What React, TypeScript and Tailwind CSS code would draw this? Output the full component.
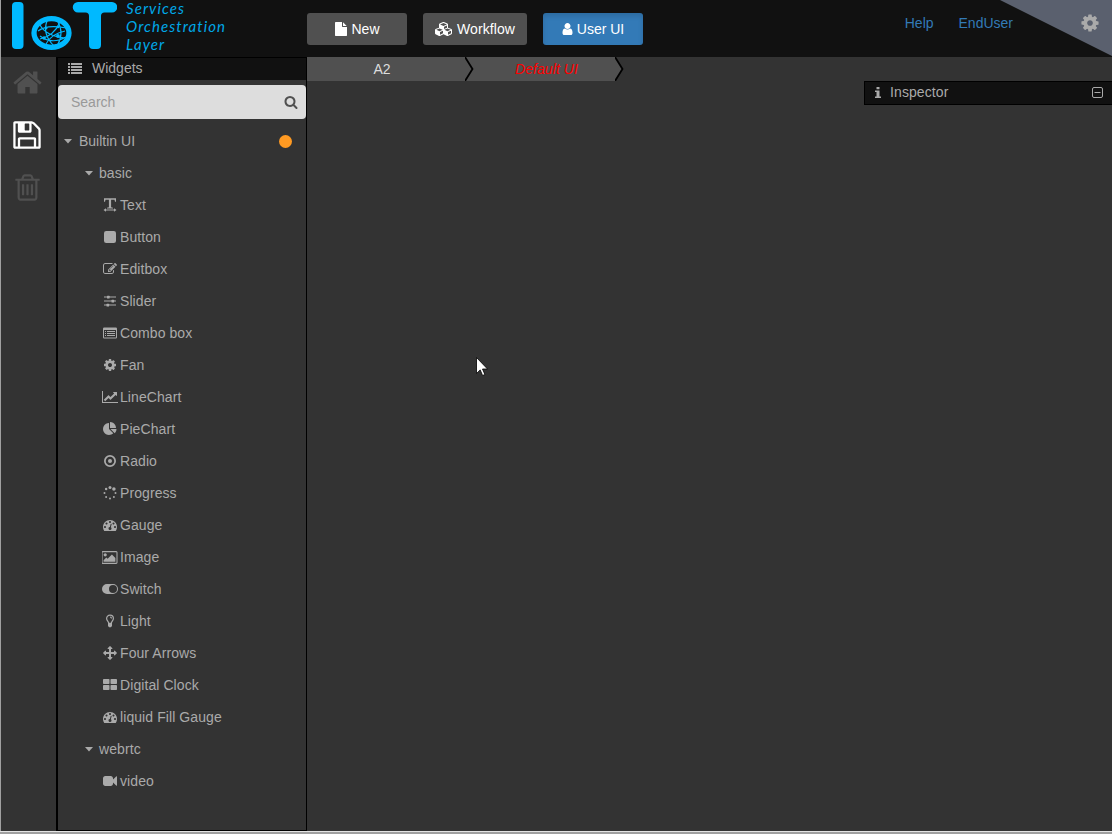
import type { ReactNode } from "react";

type GlyphProps = { w?: number; size?: string; children: ReactNode; className?: string };

function Glyph({ w = 1792, size = "h-[14px]", children, className = "" }: GlyphProps) {
  return (
    <svg viewBox={`0 0 ${w} 1792`} fill="currentColor" className={`${size} w-auto shrink-0 ${className}`}>
      {children}
    </svg>
  );
}

const home = "M1472 992v480q0 26-19 45t-45 19h-384v-384h-256v384h-384q-26 0-45-19t-19-45v-480q0-1 .5-3t.5-3l575-474 575 474q1 2 1 6zm223-69l-62 74q-8 9-21 11h-3q-13 0-21-7l-692-577-692 577q-12 8-24 7-13-2-21-11l-62-74q-8-10-7-23.5t11-21.5l719-599q32-26 76-26t76 26l244 204v-195q0-14 9-23t23-9h192q14 0 23 9t9 23v408l219 182q10 8 11 21.5t-7 23.5z";
const floppy = "M512 1536h768v-384h-768v384zm896 0h128v-896q0-14-10-38.5t-20-34.5l-281-281q-10-10-34-20t-39-10v416q0 40-28 68t-68 28h-576q-40 0-68-28t-28-68v-416h-128v1280h128v-416q0-40 28-68t68-28h832q40 0 68 28t28 68v416zm-384-928v-320q0-13-9.5-22.5t-22.5-9.5h-192q-13 0-22.5 9.5t-9.5 22.5v320q0 13 9.5 22.5t22.5 9.5h192q13 0 22.5-9.5t9.5-22.5zm640 32v928q0 40-28 68t-68 28h-1344q-40 0-68-28t-28-68v-1344q0-40 28-68t68-28h928q40 0 88 20t76 48l280 280q28 28 48 76t20 88z";
const trash = "M704 736v576q0 14-9 23t-23 9h-64q-14 0-23-9t-9-23v-576q0-14 9-23t23-9h64q14 0 23 9t9 23zm256 0v576q0 14-9 23t-23 9h-64q-14 0-23-9t-9-23v-576q0-14 9-23t23-9h64q14 0 23 9t9 23zm256 0v576q0 14-9 23t-23 9h-64q-14 0-23-9t-9-23v-576q0-14 9-23t23-9h64q14 0 23 9t9 23zm128 724v-948h-896v948q0 22 7 40.5t14.5 27 10.5 8.5h832q3 0 10.5-8.5t14.5-27 7-40.5zm-672-1076h448l-48-117q-7-9-17-11h-317q-10 2-17 11zm928 32v64q0 14-9 23t-23 9h-96v948q0 83-47 143.5t-113 60.5h-832q-66 0-113-58.5t-47-141.5v-952h-96q-14 0-23-9t-9-23v-64q0-14 9-23t23-9h309l70-167q15-37 54-63t79-26h320q40 0 79 26t54 63l70 167h309q14 0 23 9t9 23z";
const search = "M1216 832q0-185-131.5-316.5t-316.5-131.5-316.5 131.5-131.5 316.5 131.5 316.5 316.5 131.5 316.5-131.5 131.5-316.5zm512 832q0 52-38 90t-90 38q-54 0-90-38l-343-342q-179 124-399 124-143 0-273.5-55.5t-225-150-150-225-55.5-273.5 55.5-273.5 150-225 225-150 273.5-55.5 273.5 55.5 225 150 150 225 55.5 273.5q0 220-124 399l343 343q37 37 37 90z";
const cog = "M1152 896q0-106-75-181t-181-75-181 75-75 181 75 181 181 75 181-75 75-181zm512-109v222q0 12-8 23t-20 13l-185 28q-19 54-39 91 35 50 107 138 10 12 10 25t-9 23q-27 37-99 108t-94 71q-12 0-26-9l-138-108q-44 23-91 38-16 136-29 186-7 28-36 28h-222q-14 0-24.5-8.5t-11.5-21.5l-28-184q-49-16-90-37l-141 107q-10 9-25 9-14 0-25-11-126-114-165-168-7-10-7-23 0-12 8-23 15-21 51-66.5t54-70.5q-27-50-41-99l-183-27q-13-2-21-12.5t-8-23.5v-222q0-12 8-23t19-13l186-28q14-46 39-92-40-57-107-138-10-12-10-24 0-10 9-23 26-36 98.5-107.5t94.5-71.5q13 0 26 10l138 107q44-23 91-38 16-136 29-186 7-28 36-28h222q14 0 24.5 8.5t11.5 21.5l28 184q49 16 90 37l142-107q9-9 24-9 13 0 25 10 129 119 165 170 7 8 7 22 0 12-8 23-15 21-51 66.5t-54 70.5q26 50 41 98l183 28q13 2 21 12.5t8 23.5z";
const user = "M1536 1399q0 109-62.5 187t-150.5 78h-854q-88 0-150.5-78t-62.5-187q0-85 8.5-160.5t31.5-152 58.5-131 94-89 134.5-34.5q131 128 313 128t313-128q76 0 134.5 34.5t94 89 58.5 131 31.5 152 8.5 160.5zm-256-887q0 159-112.5 271.5t-271.5 112.5-271.5-112.5-112.5-271.5 112.5-271.5 271.5-112.5 271.5 112.5 112.5 271.5z";
const file = "M1152 512v-472q22 14 36 28l408 408q14 14 28 36h-472zm-128 32q0 40 28 68t68 28h544v1056q0 40-28 68t-68 28h-1344q-40 0-68-28t-28-68v-1600q0-40 28-68t68-28h800v544z";
const cubes = "M640 1632l384-192v-314l-384 164v342zm-64-454l404-173-404-173-404 173zm1088 454l384-192v-314l-384 164v342zm-64-454l404-173-404-173-404 173zm-448-293l384-165v-266l-384 164v267zm-64-379l441-189-441-189-441 189zm1088 518v416q0 36-19 67t-52 47l-448 224q-25 14-57 14t-57-14l-448-224q-5-2-7-4-2 2-7 4l-448 224q-25 14-57 14t-57-14l-448-224q-33-16-52-47t-19-67v-416q0-38 21.5-70t56.5-48l434-186v-400q0-38 21.5-70t56.5-48l448-192q23-10 50-10t50 10l448 192q35 16 56.5 48t21.5 70v400l434 186q36 16 57 48t21 70z";
const edit = "M888 1184l116-116-152-152-116 116v56h96v96h56zm440-720q-16-16-33 1l-350 350q-17 17-1 33t33-1l350-350q17-17 1-33zm80 594v190q0 119-84.5 203.5t-203.5 84.5h-832q-119 0-203.5-84.5t-84.5-203.5v-832q0-119 84.5-203.5t203.5-84.5h832q63 0 117 25 15 7 18 23 3 17-9 29l-49 49q-14 14-32 8-23-6-45-6h-832q-66 0-113 47t-47 113v832q0 66 47 113t113 47h832q66 0 113-47t47-113v-126q0-13 9-22l64-64q15-15 35-7t20 29zm-96-738l288 288-672 672h-288v-288zm444 132l-92 92-288-288 92-92q28-28 68-28t68 28l152 152q28 28 28 68t-28 68z";
const lineChart = "M2048 1536v128h-2048v-1536h128v1408h1920zm-128-1248v435q0 21-19.5 29.5t-35.5-7.5l-121-121-633 633q-10 10-23 10t-23-10l-233-233-416 416-192-192 585-585q10-10 23-10t23 10l233 233 464-464-121-121q-16-16-7.5-35.5t29.5-19.5h435q14 0 23 9t9 23z";
const pie = "M768 890l546 546q-106 108-247.5 168t-298.5 60q-209 0-385.5-103t-279.5-279.5-103-385.5 103-385.5 279.5-279.5 385.5-103v762zm187 6h773q0 157-60 298.5t-168 247.5zm709-128h-768v-768q209 0 385.5 103t279.5 279.5 103 385.5z";
const gauge = "M384 1152q0-53-37.5-90.5t-90.5-37.5-90.5 37.5-37.5 90.5 37.5 90.5 90.5 37.5 90.5-37.5 37.5-90.5zm192-448q0-53-37.5-90.5t-90.5-37.5-90.5 37.5-37.5 90.5 37.5 90.5 90.5 37.5 90.5-37.5 37.5-90.5zm428 481l101-382q6-26-7.5-48.5t-38.5-29.5-48 6.5-30 39.5l-101 382q-60 5-107 43.5t-63 98.5q-20 77 20 146t117 89 146-20 89-117q16-60-6-117t-72-91zm660-33q0-53-37.5-90.5t-90.5-37.5-90.5 37.5-37.5 90.5 37.5 90.5 90.5 37.5 90.5-37.5 37.5-90.5zm-640-640q0-53-37.5-90.5t-90.5-37.5-90.5 37.5-37.5 90.5 37.5 90.5 90.5 37.5 90.5-37.5 37.5-90.5zm448 192q0-53-37.5-90.5t-90.5-37.5-90.5 37.5-37.5 90.5 37.5 90.5 90.5 37.5 90.5-37.5 37.5-90.5zm320 448q0 261-141 483-19 29-54 29h-1402q-35 0-54-29-141-221-141-483 0-182 71-348t191-286 286-191 348-71 348 71 286 191 191 286 71 348z";
const image = "M576 576q0 80-56 136t-136 56-136-56-56-136 56-136 136-56 136 56 56 136zm1024 384v448h-1408v-192l320-320 160 160 512-512zm96-704h-1600q-13 0-22.5 9.5t-9.5 22.5v1216q0 13 9.5 22.5t22.5 9.5h1600q13 0 22.5-9.5t9.5-22.5v-1216q0-13-9.5-22.5t-22.5-9.5zm160 32v1216q0 66-47 113t-113 47h-1600q-66 0-113-47t-47-113v-1216q0-66 47-113t113-47h1600q66 0 113 47t47 113z";
const arrows = "M1792 896q0 26-19 45l-256 256q-19 19-45 19t-45-19-19-45v-128h-384v384h128q26 0 45 19t19 45-19 45l-256 256q-19 19-45 19t-45-19l-256-256q-19-19-19-45t19-45 45-19h128v-384h-384v128q0 26-19 45t-45 19-45-19l-256-256q-19-19-19-45t19-45l256-256q19-19 45-19t45 19 19 45v128h384v-384h-128q-26 0-45-19t-19-45 19-45l256-256q19-19 45-19t45 19l256 256q19 19 19 45t-19 45-45 19h-128v384h384v-128q0-26 19-45t45-19 45 19l256 256q19 19 19 45z";
const video = "M1792 352v1088q0 42-39 59-13 5-25 5-27 0-45-19l-403-403v166q0 119-84.5 203.5t-203.5 84.5h-704q-119 0-203.5-84.5t-84.5-203.5v-704q0-119 84.5-203.5t203.5-84.5h704q119 0 203.5 84.5t84.5 203.5v165l403-402q18-19 45-19 12 0 25 5 39 17 39 59z";

const gaugeIcon = <Glyph><path d={gauge} /></Glyph>;

const basic: { label: string; icon: ReactNode }[] = [
  {
    label: "Text",
    icon: (
      <svg viewBox="0 0 14 14" fill="currentColor" className="h-[14px] w-[14px]">
        <path d="M1 0.300h12v3.400h-1L11.500 1.800H8.100v7.400l1.900.5v.8H4v-.8l1.900-.5V1.800H2.500L2 3.700H1zM.5 12l2.500-1.800v1.200h8v-1.200L13.500 12 11 13.800v-1.200H3v1.200z" />
      </svg>
    ),
  },
  { label: "Button", icon: <Glyph><rect x="128" y="128" width="1536" height="1536" rx="288" /></Glyph> },
  { label: "Editbox", icon: <Glyph><path d={edit} /></Glyph> },
  {
    label: "Slider",
    icon: (
      <svg viewBox="0 0 12 12" fill="currentColor" className="h-[12px] w-[12px]">
        <path d="M0 1.500h12v1.100H0zM0 5.500h12v1.100H0zM0 9.500h12v1.100H0z" />
        <rect x="3" y="0.800" width="2.600" height="2.600" rx="0.500" />
        <rect x="7.500" y="4.800" width="2.600" height="2.600" rx="0.500" />
        <rect x="2.500" y="8.800" width="2.600" height="2.600" rx="0.500" />
      </svg>
    ),
  },
  {
    label: "Combo box",
    icon: (
      <Glyph>
        <path fillRule="evenodd" d="M160 192h1472q160 0 160 160v1088q0 160-160 160H160q-160 0-160-160V352q0-160 160-160zM128 512v928q0 32 32 32h1472q32 0 32-32V512z" />
        <path d="M256 640h128v128H256zM512 640h1024v128H512zM256 896h128v128H256zM512 896h1024v128H512zM256 1152h128v128H256zM512 1152h1024v128H512z" />
      </Glyph>
    ),
  },
  { label: "Fan", icon: <Glyph><path d={cog} /></Glyph> },
  { label: "LineChart", icon: <Glyph w={2048}><path d={lineChart} /></Glyph> },
  { label: "PieChart", icon: <Glyph><path d={pie} /></Glyph> },
  {
    label: "Radio",
    icon: (
      <Glyph>
        <circle cx="896" cy="896" r="656" fill="none" stroke="currentColor" strokeWidth="224" />
        <circle cx="896" cy="896" r="256" />
      </Glyph>
    ),
  },
  {
    label: "Progress",
    icon: (
      <Glyph>
        <circle cx="398" cy="1394" r="128" />
        <circle cx="896" cy="1600" r="128" />
        <circle cx="192" cy="896" r="128" />
        <circle cx="1394" cy="1394" r="128" />
        <circle cx="398" cy="398" r="160" />
        <circle cx="1600" cy="896" r="128" />
        <circle cx="896" cy="192" r="192" />
        <circle cx="1394" cy="398" r="224" />
      </Glyph>
    ),
  },
  { label: "Gauge", icon: gaugeIcon },
  { label: "Image", icon: <Glyph w={1856} size="h-[15px]"><path d={image} /></Glyph> },
  {
    label: "Switch",
    icon: (
      <svg viewBox="0 0 16 10" fill="currentColor" className="h-[10px] w-[16px]">
        <path fillRule="evenodd" d="M5 0h6a5 5 0 0 1 0 10H5A5 5 0 0 1 5 0zM11 1a4 4 0 0 0 0 8a4 4 0 0 0 0-8z" />
      </svg>
    ),
  },
  {
    label: "Light",
    icon: (
      <svg viewBox="0 0 8 14" fill="none" stroke="currentColor" className="h-[14px] w-[8px]">
        <path d="M2.700 9.200C2.500 7.400.6 6.800.6 4.500a3.400 3.400 0 0 1 6.800 0C7.400 6.800 5.500 7.400 5.300 9.200M4 3q1.500 0 1.500 1.400" strokeWidth="1.200" />
        <path d="M2 8.800h4v3.300L4.900 13.300H3.100L2 12.100z" fill="currentColor" stroke="none" />
      </svg>
    ),
  },
  { label: "Four Arrows", icon: <Glyph><path d={arrows} /></Glyph> },
  {
    label: "Digital Clock",
    icon: (
      <svg viewBox="0 0 14 14" fill="currentColor" className="h-[14px] w-[14px]">
        <rect x="0" y="1" width="6.500" height="5" rx="0.800" />
        <rect x="7.500" y="1" width="6.500" height="5" rx="0.800" />
        <rect x="0" y="7" width="6.500" height="5" rx="0.800" />
        <rect x="7.500" y="7" width="6.500" height="5" rx="0.800" />
      </svg>
    ),
  },
  { label: "liquid Fill Gauge", icon: gaugeIcon },
];

function Caret() {
  return (
    <svg viewBox="0 0 8 5" fill="currentColor" className="h-[5px] w-[8px] shrink-0">
      <path d="M0 0h8L4 4.500z" />
    </svg>
  );
}

function Leaf({ label, icon }: { label: string; icon: ReactNode }) {
  return (
    <div className="flex h-8 items-center pl-[43px]">
      <span className="flex w-[18px] justify-center">{icon}</span>
      <span className="pl-px tracking-[0.080px]">{label}</span>
    </div>
  );
}

function Logo() {
  return (
    <div className="flex h-full w-[306px] shrink-0 pl-[10px]">
      <svg viewBox="0 0 106 52" className="h-[52px] w-[106px] shrink-0" fill="#00b9ff">
        <rect x="1" y="2" width="11.500" height="47" rx="4" />
        <path d="M67 2h34a4.500 4.500 0 0 1 0 10.500H93.500q-3.500 0-3.500 3.500v29a4 4 0 0 1-4 4h-4a4 4 0 0 1-4-4V16q0-3.500-3.500-3.500H67a4.500 4.500 0 0 1 0-10.500z" />
        <ellipse cx="40.500" cy="33" rx="17.500" ry="14.300" fill="none" stroke="#00b9ff" strokeWidth="5.300" />
        <g fill="none" stroke="#00b9ff" strokeWidth="1.200">
          <path d="M27 31q9-7 28-3M29 36q12 9 26 1M36 21q-5 13 7 25M46 20q8 13 0 26M29 39q14-3 20-17M29 25q6 11 25 13M35 44q5-10 19-13" />
        </g>
        <circle cx="35" cy="28" r="1.500" />
        <circle cx="33" cy="38" r="1.700" />
        <circle cx="47" cy="36" r="1.900" />
        <circle cx="47" cy="27" r="1.300" />
      </svg>
      <div className="-mt-px pl-[9px] font-[Lato] text-[15px] leading-[18px] tracking-[1.080px] text-[#00a8e8] italic">
        <div>Services</div>
        <div>Orchestration</div>
        <div>Layer</div>
      </div>
    </div>
  );
}

export default function App() {
  return (
    <div className="relative flex h-[834px] w-[1112px] flex-col overflow-hidden bg-[#333333] font-['Liberation_Sans',Arial,sans-serif] text-[14px] leading-5 text-[#aaaaaa]">
      <div className="flex min-h-0 flex-1 flex-col border-l border-[#a0a0a0]">
        <header className="flex h-[57px] shrink-0 bg-[#111111]">
          <Logo />
          <div className="flex gap-4 pt-[13px] text-white">
            <button className="flex h-8 w-[100px] items-center justify-center gap-1 rounded-[3px] bg-[#505050]">
              <Glyph w={1664}><path d={file} /></Glyph>New
            </button>
            <button className="flex h-8 w-[104px] items-center justify-center gap-1 rounded-[3px] bg-[#505050] tracking-[0.080px]">
              <Glyph w={2304}><path d={cubes} /></Glyph>Workflow
            </button>
            <button className="flex h-8 w-[100px] items-center justify-center gap-1 rounded-[3px] bg-[#337ab7] shadow-[inset_0_3px_5px_rgba(0,0,0,0.125)]">
              <Glyph w={1408}><path d={user} transform="translate(-192 0)" /></Glyph>User UI
            </button>
          </div>
          <nav className="ml-auto flex gap-[25px] pt-[13px] pr-px text-[#337ab7]">
            <a>Help</a>
            <a>EndUser</a>
          </nav>
          <div className="-ml-[14px] flex h-[56px] w-[112px] justify-end bg-[#5a606e] pt-[13px] pr-[12px] [clip-path:polygon(0_0,100%_0,100%_100%)]">
            <Glyph size="h-[20px]"><path d={cog} /></Glyph>
          </div>
        </header>

        <div className="flex min-h-0 flex-1">
          <aside className="flex w-[55px] shrink-0 flex-col items-center gap-[22px] pt-[10px] pr-[3px] text-[#505050]">
            <Glyph size="h-[31px]"><path d={home} /></Glyph>
            <Glyph size="h-[32px]" className="-mt-px text-white"><path d={floppy} /></Glyph>
            <Glyph size="h-[31px]" className="-mt-px"><path d={trash} /></Glyph>
          </aside>

          <section className="flex w-[251px] shrink-0 flex-col border-y border-r border-l-2 border-black">
            <div className="flex h-[22px] items-center gap-[10px] bg-[#111111] pb-[2px] pl-[10px]">
              <svg viewBox="0 0 14 11" fill="currentColor" className="h-[11px] w-[14px]">
                <path d="M0 0h2v2H0zM3 0h11v2H3zM0 3h2v2H0zM3 3h11v2H3zM0 6h2v2H0zM3 6h11v2H3zM0 9h2v2H0zM3 9h11v2H3z" />
              </svg>
              Widgets
            </div>
            <div className="mt-[5px] flex h-[34px] items-center justify-between rounded-[4px] bg-[#dddddd] pr-[8px] pl-[13px] text-[#999999]">
              Search
              <Glyph size="h-[14px]" className="text-[#505050]"><path d={search} /></Glyph>
            </div>
            <div className="pt-[6px]">
              <div className="flex h-8 items-center pl-[6px]">
                <Caret />
                <span className="pl-[7px]">Builtin UI</span>
                <span className="mr-[14px] ml-auto h-[13px] w-[13px] rounded-full bg-[#ff9a22]" />
              </div>
              <div className="flex h-8 items-center pl-[27px]">
                <Caret />
                <span className="pl-[6px] tracking-[0.080px]">basic</span>
              </div>
              {basic.map((item) => (
                <Leaf key={item.label} {...item} />
              ))}
              <div className="flex h-8 items-center pl-[27px]">
                <Caret />
                <span className="pl-[6px] tracking-[0.080px]">webrtc</span>
              </div>
              <Leaf label="video" icon={<Glyph><path d={video} /></Glyph>} />
            </div>
          </section>

          <main className="flex min-w-0 flex-1 flex-col">
            <div className="flex h-6">
              <div className="flex w-[158px] items-center justify-center bg-[#505050] pr-[8px] text-[#dddddd]">A2</div>
              <Chevron next="#505050" />
              <div className="flex w-[141px] items-center justify-center bg-[#505050] pl-[4px] tracking-[0.080px] text-[#ff0000] italic">Default UI</div>
              <Chevron next="#333333" />
            </div>
            <div className="flex h-6 w-[248px] items-center self-end border border-r-0 border-black bg-[#111111] pr-[9px] pb-[2px] pl-[10px]">
              <svg viewBox="0 0 6 11" fill="currentColor" className="h-[11px] w-[6px]">
                <path d="M1.500 0h3v2.200h-3zM0 3.500h4.500v6H6V11H0V9.500h1.500V5H0z" />
              </svg>
              <span className="pl-[9px] tracking-[0.100px]">Inspector</span>
              <svg viewBox="0 0 11 11" fill="none" stroke="currentColor" className="ml-auto h-[11px] w-[11px]">
                <rect x="0.500" y="0.500" width="10" height="10" rx="1.500" />
                <path d="M2.500 5.500h6" />
              </svg>
            </div>
          </main>
        </div>
      </div>
      <div className="h-[3px] shrink-0 border-t border-[#e3e3e3] bg-[#a0a0a0]" />

      <svg viewBox="0 0 12 20" className="absolute top-[357px] left-[476px] h-[20px] w-[12px]">
        <path d="M.5.5v16l3.700-3.600 2.400 5.600 2.300-1-2.400-5.500h5z" fill="white" stroke="black" strokeWidth="0.800" />
      </svg>
    </div>
  );
}

function Chevron({ next }: { next: string }) {
  return (
    <svg viewBox="0 0 9 24" className="h-6 w-[9px] shrink-0">
      <rect width="9" height="24" fill={next} />
      <path d="M0 0l7.500 12L0 24z" fill="#505050" />
      <path d="M0 0l7.500 12L0 24" fill="none" stroke="black" strokeWidth="1.800" />
    </svg>
  );
}
